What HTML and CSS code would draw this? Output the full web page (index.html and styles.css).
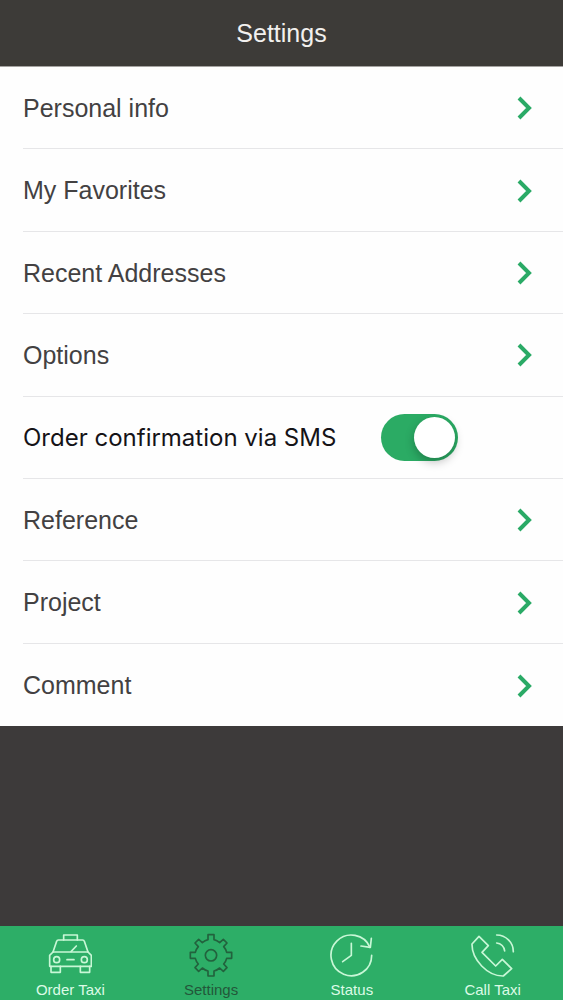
FILE: index.html
```
<!DOCTYPE html>
<html lang="en">
<head>
    <meta charset="UTF-8">
    <meta name="viewport" content="width=device-width, initial-scale=1.0">
    <title>Settings</title>
    <link rel="stylesheet" href="styles.css">
</head>
<body>
    <header class="header">
        <h1>Settings</h1>
    </header>

    <main class="content">
        <ul class="list">
            <li><a class="row" href="#personal">Personal info <svg class="chevron" viewBox="0 0 16 24"><path d="M3 2l10 10L3 22"/></svg></a></li>
            <li><a class="row" href="#favorites">My Favorites <svg class="chevron" viewBox="0 0 16 24"><path d="M3 2l10 10L3 22"/></svg></a></li>
            <li><a class="row" href="#recent">Recent Addresses <svg class="chevron" viewBox="0 0 16 24"><path d="M3 2l10 10L3 22"/></svg></a></li>
            <li><a class="row" href="#options">Options <svg class="chevron" viewBox="0 0 16 24"><path d="M3 2l10 10L3 22"/></svg></a></li>
            <li>
                <div class="row row-switch">
                    <label for="sms">Order confirmation via SMS</label>
                    <input class="switch" type="checkbox" id="sms" checked>
                </div>
            </li>
            <li><a class="row" href="#reference">Reference <svg class="chevron" viewBox="0 0 16 24"><path d="M3 2l10 10L3 22"/></svg></a></li>
            <li><a class="row" href="#project">Project <svg class="chevron" viewBox="0 0 16 24"><path d="M3 2l10 10L3 22"/></svg></a></li>
            <li><a class="row" href="#comment">Comment <svg class="chevron" viewBox="0 0 16 24"><path d="M3 2l10 10L3 22"/></svg></a></li>
        </ul>
    </main>

    <nav class="tabs">
        <a class="tab" href="#order">
            <svg viewBox="0 0 132 132">
                <path d="M47 21V6h41v15"/>
                <path d="M15 57L26 25Q27 21 31 21H104Q108 21 109 25L120 57"/>
                <path d="M15 57H120L130 67V100H5V67Z"/>
                <path d="M9 100v18h28v-18M97 100v18h28v-18"/>
                <path d="M57 80h21M69 56L85 39"/>
                <circle cx="26" cy="80" r="9"/>
                <circle cx="109" cy="80" r="9"/>
            </svg>
            Order Taxi
        </a>
        <a class="tab active" href="#settings">
            <svg viewBox="-66 -67 132 132">
                <path d="M-9-62H9V-47Q18-45 26-38L37-48L48-37L38-26Q45-18 47-9H62V9H47Q45 18 38 26L48 37L37 48L26 38Q18 45 9 47V62H-9V47Q-18 45-26 38L-37 48L-48 37L-38 26Q-45 18-47 9H-62V-9H-47Q-45-18-38-26L-48-37L-37-48L-26-38Q-18-45-9-47Z"/>
                <circle cx="0" cy="0" r="17"/>
            </svg>
            Settings
        </a>
        <a class="tab" href="#status">
            <svg viewBox="0 0 132 132">
                <path d="M125 67A61 61 0 1 1 120 43"/>
                <path d="M93 39L121 43L124 16"/>
                <path d="M64 31V67L38 86"/>
            </svg>
            Status
        </a>
        <a class="tab" href="#call">
            <svg viewBox="0 0 132 132">
                <path d="M24 10L3 33C2 80 50 130 97 129L122 107L94 79L74 99L33 58L52 38Z"/>
                <path d="M77 30A26 26 0 0 1 101 54M77 6A50 50 0 0 1 127 56"/>
            </svg>
            Call Taxi
        </a>
    </nav>
</body>
</html>
```
FILE: styles.css
```
*{
    box-sizing: border-box;
}

body{
    margin: 0;
    min-height: 100vh;
    display: flex;
    flex-direction: column;
    background-color: #3d3a3a;
    color: #434142;
    font-family: "Liberation Sans", Arial, sans-serif;
    font-size: 25px;
}

a{
    color: inherit;
    text-decoration: none;
}

.header{
    height: 67px;
    display: flex;
    align-items: center;
    justify-content: center;
    background-color: #3d3b38;
    border-bottom: 1px solid #a5a3a1;
    color: #f2f0ee;
}

h1{
    margin: 0;
    font-size: 25px;
    font-weight: normal;
}

.content{
    flex: 1;
    display: flex;
    flex-direction: column;
}

/* dark area is left under the list */
.content::after{
    content: "";
    flex: 10 1 0;
}

.list{
    flex: 33 1 0;
    display: flex;
    flex-direction: column;
    margin: 0;
    padding: 0;
    list-style: none;
    background-color: #fefefe;
}

.list li{
    flex: 1;
    display: flex;
    padding-left: 23px;
}

.row{
    flex: 1;
    display: flex;
    align-items: center;
    justify-content: space-between;
    min-height: 60px;
    padding-top: 1px;
    padding-right: 31px;
    border-bottom: 1px solid #e6e6e8;
}

.list li:last-child .row{
    border-bottom: none;
}

.row-switch{
    padding-right: 105px;
    color: #151317;
    font-family: Inter, sans-serif;
    font-size: 24px;
}

.chevron{
    width: 16px;
    height: 24px;
    fill: none;
    stroke: #2aaa66;
    stroke-width: 4;
}

.switch{
    appearance: none;
    width: 77px;
    height: 47px;
    margin: 0;
    padding: 3px;
    border-radius: 24px;
    background-color: #2bab64;
}

.switch::before{
    content: "";
    display: block;
    width: 41px;
    height: 41px;
    border-radius: 50%;
    background-color: #fff;
    box-shadow: 0 4px 10px rgba(0, 0, 0, 0.25);
}

.switch:checked::before{
    margin-left: auto;
}

.tabs{
    display: flex;
    height: 74px;
    background-color: #2dae67;
    color: #dcfbe6;
    font-size: 15px;
    line-height: 18px;
}

.tab{
    flex: 1;
    display: flex;
    flex-direction: column;
    align-items: center;
    gap: 4px;
    padding-top: 7px;
}

.tab svg{
    width: 44px;
    height: 44px;
    fill: none;
    stroke: #c8f7d6;
    stroke-width: 5;
    stroke-linejoin: round;
    stroke-linecap: round;
}

.tab.active{
    color: #23573a;
}

.tab.active svg{
    stroke: #22623d;
}
```
